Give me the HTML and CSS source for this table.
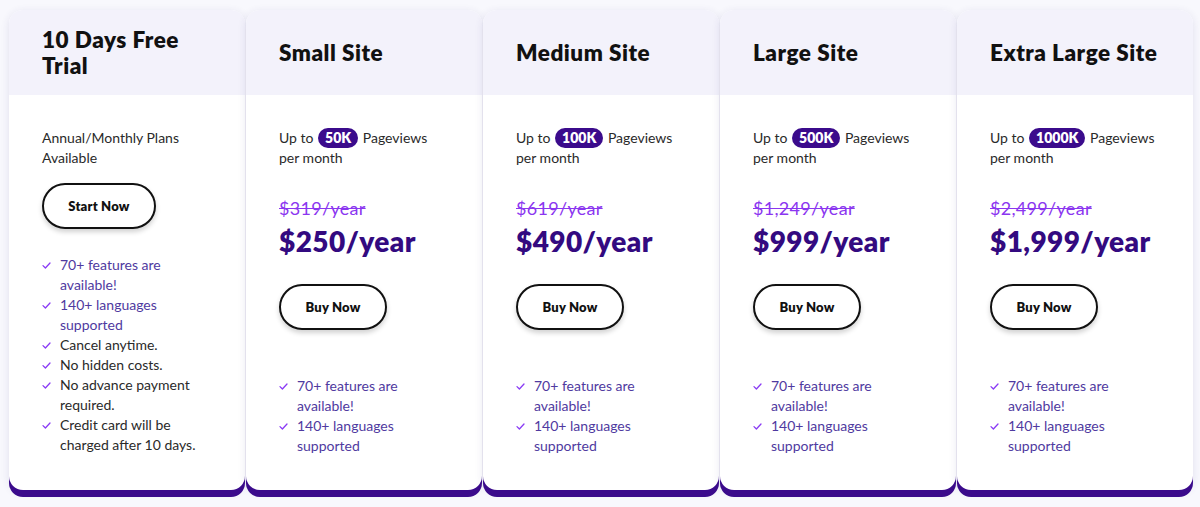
FILE: index.html
```html
<!DOCTYPE html>
<html lang="en">
<head>
<meta charset="utf-8">
<title>Pricing</title>
<link rel="stylesheet" href="styles.css">
</head>
<body>
<div class="plans">
  <div class="card">
    <div class="card-head"><h2>10 Days Free Trial</h2></div>
    <div class="card-body">
      <p class="desc">Annual/Monthly Plans Available</p>
      <a class="btn btn-trial">Start Now</a>
      <ul class="features">
        <li class="hl"><svg class="chk" viewBox="0 0 9 7"><path d="M1 3.6 L3.4 6 L8 1"/></svg>70+ features are available!</li>
        <li class="hl"><svg class="chk" viewBox="0 0 9 7"><path d="M1 3.6 L3.4 6 L8 1"/></svg>140+ languages supported</li>
        <li><svg class="chk" viewBox="0 0 9 7"><path d="M1 3.6 L3.4 6 L8 1"/></svg>Cancel anytime.</li>
        <li><svg class="chk" viewBox="0 0 9 7"><path d="M1 3.6 L3.4 6 L8 1"/></svg>No hidden costs.</li>
        <li><svg class="chk" viewBox="0 0 9 7"><path d="M1 3.6 L3.4 6 L8 1"/></svg>No advance payment required.</li>
        <li><svg class="chk" viewBox="0 0 9 7"><path d="M1 3.6 L3.4 6 L8 1"/></svg>Credit card will be charged after 10 days.</li>
      </ul>
    </div>
  </div>

  <div class="card">
    <div class="card-head"><h2>Small Site</h2></div>
    <div class="card-body">
      <p class="desc"><span>Up to</span> <span class="badge">50K</span> <span>Pageviews</span> <span>per month</span></p>
      <div class="old">$319/year</div>
      <div class="price">$250/year</div>
      <a class="btn">Buy Now</a>
      <ul class="features paid">
        <li class="hl"><svg class="chk" viewBox="0 0 9 7"><path d="M1 3.6 L3.4 6 L8 1"/></svg>70+ features are available!</li>
        <li class="hl"><svg class="chk" viewBox="0 0 9 7"><path d="M1 3.6 L3.4 6 L8 1"/></svg>140+ languages supported</li>
      </ul>
    </div>
  </div>

  <div class="card">
    <div class="card-head"><h2>Medium Site</h2></div>
    <div class="card-body">
      <p class="desc"><span>Up to</span> <span class="badge">100K</span> <span>Pageviews</span> <span>per month</span></p>
      <div class="old">$619/year</div>
      <div class="price">$490/year</div>
      <a class="btn">Buy Now</a>
      <ul class="features paid">
        <li class="hl"><svg class="chk" viewBox="0 0 9 7"><path d="M1 3.6 L3.4 6 L8 1"/></svg>70+ features are available!</li>
        <li class="hl"><svg class="chk" viewBox="0 0 9 7"><path d="M1 3.6 L3.4 6 L8 1"/></svg>140+ languages supported</li>
      </ul>
    </div>
  </div>

  <div class="card">
    <div class="card-head"><h2>Large Site</h2></div>
    <div class="card-body">
      <p class="desc"><span>Up to</span> <span class="badge">500K</span> <span>Pageviews</span> <span>per month</span></p>
      <div class="old">$1,249/year</div>
      <div class="price">$999/year</div>
      <a class="btn">Buy Now</a>
      <ul class="features paid">
        <li class="hl"><svg class="chk" viewBox="0 0 9 7"><path d="M1 3.6 L3.4 6 L8 1"/></svg>70+ features are available!</li>
        <li class="hl"><svg class="chk" viewBox="0 0 9 7"><path d="M1 3.6 L3.4 6 L8 1"/></svg>140+ languages supported</li>
      </ul>
    </div>
  </div>

  <div class="card">
    <div class="card-head"><h2>Extra Large Site</h2></div>
    <div class="card-body">
      <p class="desc"><span>Up to</span> <span class="badge">1000K</span> <span>Pageviews</span> <span>per month</span></p>
      <div class="old">$2,499/year</div>
      <div class="price">$1,999/year</div>
      <a class="btn">Buy Now</a>
      <ul class="features paid">
        <li class="hl"><svg class="chk" viewBox="0 0 9 7"><path d="M1 3.6 L3.4 6 L8 1"/></svg>70+ features are available!</li>
        <li class="hl"><svg class="chk" viewBox="0 0 9 7"><path d="M1 3.6 L3.4 6 L8 1"/></svg>140+ languages supported</li>
      </ul>
    </div>
  </div>
</div>
</body>
</html>
```

FILE: styles.css
```css
* { box-sizing: border-box; }
html, body { margin: 0; padding: 0; }
body {
  background: #f8f8fd;
  font-family: Lato, "Open Sans", "Liberation Sans", sans-serif;
  color: #222;
  width: 1200px;
  height: 507px;
  overflow: hidden;
}
.plans {
  display: grid;
  grid-template-columns: repeat(5, 1fr);
  gap: 1px;
  padding: 10px 7px 0 9px;
}
.card {
  background: #fff;
  border-radius: 14px;
  display: flex;
  flex-direction: column;
  box-shadow: 0 7px 0 #3b0b8c, 0 2px 8px rgba(60, 50, 120, 0.12);
  overflow: hidden;
  height: 480px;
}
.card-head {
  background: #f3f2fb;
  height: 85px;
  display: flex;
  align-items: center;
  padding: 0 30px 0 33px;
}
.card-head h2 {
  margin: 0;
  font-size: 22.5px;
  line-height: 26px;
  font-weight: 800;
  color: #111;
  letter-spacing: 0.5px;
}
.card-body {
  padding: 33px 33px 0;
  display: flex;
  flex-direction: column;
  align-items: flex-start;
}
.desc {
  margin: 0;
  font-size: 14px;
  line-height: 20px;
  color: #2a2a2a;
}
.badge {
  display: inline-block;
  vertical-align: top;
  background: #3b0b8c;
  color: #fff;
  font-weight: 800;
  font-size: 14px;
  line-height: 20px;
  height: 20px;
  padding: 0 7px;
  border-radius: 10px;
  margin: 0 1px;
}
.old {
  margin-top: 28px;
  font-size: 18px;
  line-height: 24px;
  letter-spacing: 0.3px;
  color: #8b36f0;
  text-decoration: line-through;
}
.price {
  font-size: 28px;
  line-height: 34px;
  font-weight: 800;
  letter-spacing: 0.4px;
  color: #330a80;
  margin-top: 4px;
}
.btn {
  display: inline-flex;
  align-items: center;
  justify-content: center;
  width: 108px;
  height: 46px;
  border: 2px solid #111;
  border-radius: 23px;
  background: #fff;
  color: #111;
  font-size: 13px;
  font-weight: 800;
  letter-spacing: 0.2px;
  box-shadow: 0 3px 5px rgba(0, 0, 0, 0.18);
  margin-top: 26px;
  cursor: pointer;
}
.btn-trial {
  width: 114px;
  margin-top: 15px;
}
.features {
  list-style: none;
  margin: 26px 0 0;
  padding: 0;
  font-size: 14px;
  line-height: 20px;
  color: #2a2a2a;
}
.features.paid { margin-top: 46px; }
.features li {
  position: relative;
  padding-left: 18px;
}
.features li.hl { color: #4f3aa0; }
.chk {
  position: absolute;
  left: 0;
  top: 7px;
  width: 9px;
  height: 7px;
  fill: none;
  stroke: #8a3cf5;
  stroke-width: 1.3;
  stroke-linecap: round;
  stroke-linejoin: round;
}
```
